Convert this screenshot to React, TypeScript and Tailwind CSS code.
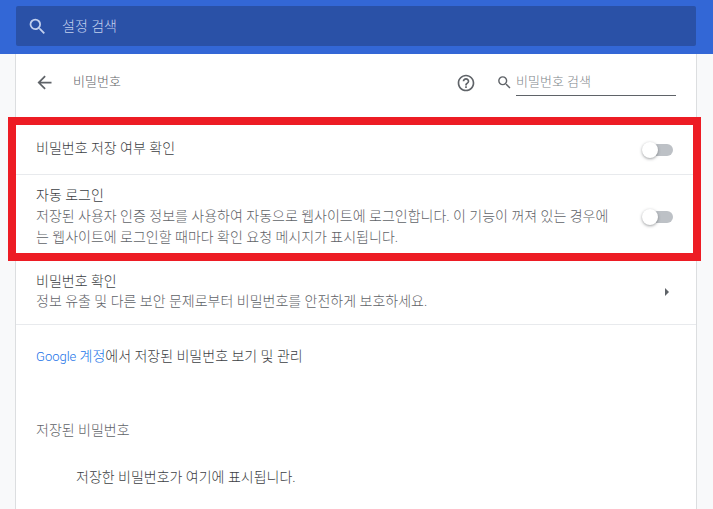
const font = "font-['Roboto','Noto_Sans_CJK_KR',sans-serif]";

function SearchIcon({ size, className }: { size: number; className: string }) {
  return (
    <svg width={size} height={size} viewBox="0 0 24 24" fill="currentColor" className={className}>
      <path d="M15.5 14h-.79l-.28-.27A6.471 6.471 0 0 0 16 9.5 6.5 6.5 0 1 0 9.5 16c1.61 0 3.09-.59 4.23-1.57l.27.28v.79l5 4.99L20.49 19l-4.99-5zm-6 0C7.01 14 5 11.99 5 9.5S7.01 5 9.5 5 14 7.01 14 9.5 11.99 14 9.5 14z" />
    </svg>
  );
}

function Toggle() {
  return (
    <div className="relative w-[31px] h-[16px] shrink-0">
      <div className="absolute left-[1px] top-[2px] w-[30px] h-[12px] rounded-full bg-[#bdc1c6]" />
      <div className="absolute left-0 top-0 w-[16px] h-[16px] rounded-full bg-white shadow-[0_1px_3px_rgba(60,64,67,0.5)]" />
    </div>
  );
}

export default function App() {
  return (
    <div className={`${font} relative w-[713px] h-[509px] overflow-hidden bg-[#f8f9fa] text-[14px] font-light`}>
      {/* Toolbar */}
      <div className="h-[54px] bg-[#3367d6] pl-[16px] pt-[6px]">
        <div className="w-[680px] h-[40px] rounded-[2px] bg-[#2a51a7] flex items-center pl-[11px] gap-[14px] text-[#c2d0ee]">
          <SearchIcon size={21} className="text-[#c2d0ee]" />
          <span>설정 검색</span>
        </div>
      </div>

      {/* Card */}
      <div className="ml-[15px] w-[682px] h-[455px] bg-white border-x border-[#dcdee0]">
        {/* Subpage header */}
        <div className="h-[57px] flex items-center pl-[18px] pr-[20px] text-[13px]">
          <svg width="21" height="21" viewBox="0 0 24 24" fill="#5f6368">
            <path d="M20 11H7.83l5.59-5.59L12 4l-8 8 8 8 1.41-1.41L7.83 13H20v-2z" />
          </svg>
          <span className="ml-[18px] mb-[1px] text-[#5f6368]">비밀번호</span>
          <div className="ml-auto flex items-center">
            <svg width="20" height="20" viewBox="0 0 24 24" fill="#5f6368" className="mr-[20px]">
              <path d="M11 18h2v-2h-2v2zm1-16C6.48 2 2 6.48 2 12s4.48 10 10 10 10-4.48 10-10S17.52 2 12 2zm0 18c-4.41 0-8-3.59-8-8s3.59-8 8-8 8 3.59 8 8-3.59 8-8 8zm0-14c-2.21 0-4 1.79-4 4h2c0-1.1.9-2 2-2s2 .9 2 2c0 2-3 1.75-3 5h2c0-2.25 3-2.5 3-5 0-2.21-1.79-4-4-4z" />
            </svg>
            <SearchIcon size={17} className="text-[#5f6368] mr-[3px]" />
            <div className="w-[160px] h-[26px] border-b border-[#5f6368] text-[#80868b] leading-[24px]">
              비밀번호 검색
            </div>
          </div>
        </div>

        {/* Settings rows */}
        <div className="mt-[14px]">
          <div className="h-[50px] pl-[20px] pr-[23px] flex items-center justify-between border-b border-[#e8eaed] text-[#3c4043]">
            <span className="mb-[3px]">비밀번호 저장 여부 확인</span>
            <Toggle />
          </div>
          <div className="h-[84px] pl-[20px] pr-[23px] flex items-center justify-between">
            <div className="leading-[21px] mb-[2px]">
              <div className="text-[#3c4043]">자동 로그인</div>
              <div className="text-[#5f6368]">
                저장된 사용자 인증 정보를 사용하여 자동으로 웹사이트에 로그인합니다. 이 기능이 꺼져 있는 경우에
                <br />는 웹사이트에 로그인할 때마다 확인 요청 메시지가 표시됩니다.
              </div>
            </div>
            <Toggle />
          </div>
          <div className="h-[66px] pl-[20px] pr-[27px] flex items-center justify-between border-b border-[#e8eaed]">
            <div className="leading-[20px] mb-[2px]">
              <div className="text-[#3c4043]">비밀번호 확인</div>
              <div className="text-[#5f6368]">정보 유출 및 다른 보안 문제로부터 비밀번호를 안전하게 보호하세요.</div>
            </div>
            <div className="w-0 h-0 border-y-[4.5px] border-y-transparent border-l-[4.5px] border-l-[#5f6368]" />
          </div>
          <div className="pl-[20px] pt-[21px] leading-[20px] text-[#3c4043]">
            <span className="text-[#1a73e8] text-[13px]">Google <span className="text-[14px]">계정</span></span>에서 저장된 비밀번호 보기 및 관리
          </div>
          <div className="pl-[20px] pt-[53px] leading-[20px] text-[#5f6368]">저장된 비밀번호</div>
          <div className="pl-[60px] pt-[27px] leading-[20px] text-[#3c4043]">저장한 비밀번호가 여기에 표시됩니다.</div>
        </div>
      </div>

      {/* Annotation highlight */}
      <div className="absolute left-[8px] top-[117px] w-[693px] h-[144px] border-[8px] border-[#ed1c24]" />
    </div>
  );
}
